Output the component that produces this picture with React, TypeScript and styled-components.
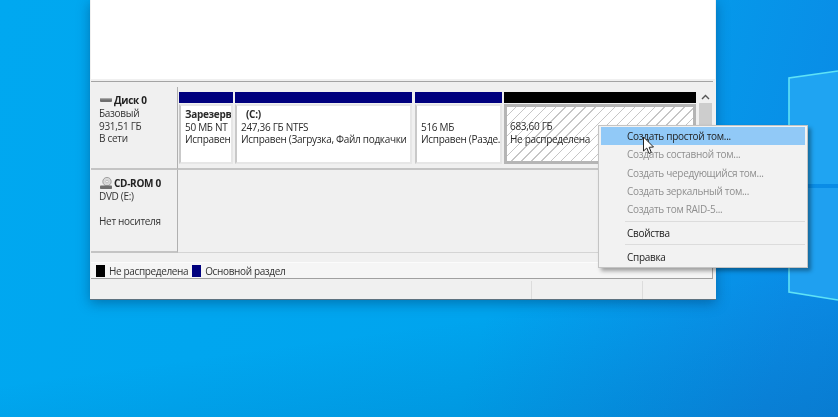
import React from "react";
import styled, { createGlobalStyle } from "styled-components";

const Global = createGlobalStyle`
  html, body { margin: 0; padding: 0; height: 100%; overflow: hidden; }
  #root { height: 100%; }
`;

const Desktop = styled.div`
  position: relative;
  width: 838px;
  height: 417px;
  overflow: hidden;
  padding: 0 0 0 90px;
  box-sizing: border-box;
  background:
    linear-gradient(172deg, rgba(0, 60, 130, 0) 72%, rgba(0, 50, 110, 0.16) 100%),
    linear-gradient(105deg, #00a8f0 0%, #00a4ee 60%, #0a8ce6 92%, #0a8ae4 100%);
  font-family: "Open Sans", "Noto Sans", sans-serif;
  font-size: 10px;
  letter-spacing: -0.3px;
  color: #222;
`;

const Wallpaper = styled.svg`
  position: absolute;
  left: 0;
  top: 0;
`;

const Window = styled.div`
  position: relative;
  width: 626px;
  height: 300px;
  box-sizing: border-box;
  padding: 0 1px 0 1px;
  background: #f0f0f0;
  display: flex;
  flex-direction: column;
  box-shadow: 0 3px 12px rgba(0, 40, 80, 0.4);
  border-bottom: 1px solid #5d7280;
  filter: blur(0.3px);
`;

const ListArea = styled.div`
  height: 79px;
  flex: none;
  background: #fff;
`;

const Splitter = styled.div`
  height: 2px;
  flex: none;
  margin: 0 2px 1px 0;
  background: #f0f0f0;
  border-bottom: 1px solid #a4a4a4;
`;

const DiskPane = styled.div`
  flex: none;
  height: 170px;
  margin-right: 3px;
  padding-top: 4px;
  background: #f0f0f0;
  display: flex;
  flex-direction: column;
  border-bottom: 1px solid #d4d4d4;
  box-sizing: border-box;
  position: relative;
`;

const DiskRow = styled.div<{ $h: number }>`
  display: flex;
  height: ${(p) => p.$h}px;
  flex: none;
`;

const DiskLabel = styled.div`
  width: 87px;
  flex: none;
  box-sizing: border-box;
  border-right: 1px solid #b0b0b0;
  border-bottom: 2px solid #c4c4c4;
  padding: 7px 0 0 8px;
  line-height: 12.6px;
  color: #333;
`;

const DiskTitle = styled.div`
  display: flex;
  align-items: center;
  gap: 1px;
  font-weight: 700;
  color: #222;
  height: 13px;
`;

const DiskLine = styled.div<{ $gapBefore?: boolean }>`
  margin-top: ${(p) => (p.$gapBefore ? "12px" : "0")};
  white-space: nowrap;
`;

const Partitions = styled.div`
  flex: 1;
  min-width: 0;
  display: flex;
  align-items: flex-start;
  padding: 5px 0 0 1px;
  border-bottom: 2px solid #c4c4c4;
  box-sizing: border-box;
  height: 83px;
`;

const Partition = styled.div<{ $w: number; $gap: number }>`
  width: ${(p) => p.$w}px;
  margin-right: ${(p) => p.$gap}px;
  flex: none;
  display: flex;
  flex-direction: column;
`;

const PartBar = styled.div<{ $black?: boolean }>`
  height: 11px;
  background: ${(p) => (p.$black ? "#000" : "#00007e")};
`;

const PartBody = styled.div<{ $hatched?: boolean }>`
  height: 60px;
  margin-top: 1px;
  box-sizing: border-box;
  border: ${(p) => (p.$hatched ? "3px solid #b5b5b5" : "2px solid #e6e6e6")};
  border-left-color: ${(p) => (p.$hatched ? "#b5b5b5" : "#c9c9c9")};
  padding: ${(p) => (p.$hatched ? "13px 0 0 3px" : "2px 0 0 4px")};
  line-height: 12.6px;
  overflow: hidden;
  white-space: nowrap;
  color: #2a2a2a;
  background: ${(p) =>
    p.$hatched
      ? "repeating-linear-gradient(135deg, #fff 0 6px, #c6c6c6 6px 7px)"
      : "#fff"};
`;

const PartTitle = styled.div`
  font-weight: 700;
  height: 12.6px;
`;

const Spacer = styled.div`
  height: 12.6px;
`;

const DriveName = styled.div`
  padding-left: 5px;
  font-weight: 700;
  height: 12.6px;
`;

const Scroll = styled.div`
  width: 13px;
  flex: none;
  margin-left: 3px;
  display: flex;
  flex-direction: column;
  align-items: center;
`;

const ScrollArrow = styled.svg`
  margin-top: 2px;
  margin-bottom: 3px;
`;

const ScrollThumb = styled.div`
  width: 100%;
  height: 120px;
  background: #cdcdcd;
`;

const Empty = styled.div`
  flex: 1;
`;

const Legend = styled.div`
  height: 15px;
  flex: none;
  margin: 9px 2px 0 0;
  padding-left: 5px;
  display: flex;
  align-items: center;
  color: #333;
  background: #f5f5f5;
  border-top: 1px solid #fbfbfb;
  border-right: 1px solid #a8a8a8;
  border-bottom: 1px solid #a0a0a0;
`;

const Swatch = styled.span<{ $c: string }>`
  width: 9px;
  height: 12px;
  background: ${(p) => p.$c};
  margin-right: 4px;
`;

const LegendText = styled.span`
  margin-right: 4px;
  letter-spacing: -0.36px;
`;

const Status = styled.div`
  flex: 1;
  display: flex;
  justify-content: flex-end;
  padding-top: 2px;
`;

const StatusCell = styled.div<{ $w: number }>`
  width: ${(p) => p.$w}px;
  border-left: 1px solid #dcdcdc;
`;

const Menu = styled.div`
  position: absolute;
  left: 598px;
  top: 125px;
  width: 210px;
  height: 143px;
  box-sizing: border-box;
  padding: 1px 2px;
  background: #f2f2f2;
  border: 1px solid #c4c4c4;
  box-shadow: 3px 3px 4px rgba(0, 0, 0, 0.35);
  filter: blur(0.3px);
`;

const MenuItem = styled.div<{ $active?: boolean; $off?: boolean }>`
  height: 18.3px;
  line-height: 18.3px;
  padding-left: 26px;
  white-space: nowrap;
  color: ${(p) => (p.$off ? "#8f8f8f" : "#222")};
  background: ${(p) => (p.$active ? "#91c9f7" : "transparent")};
`;

const MenuSep = styled.div`
  height: 1px;
  margin: 2.2px 0 2.2px 24px;
  background: #dcdcdc;
`;

const Cursor = styled.svg`
  position: absolute;
  left: 642px;
  top: 136px;
`;

const DiskIcon = () => (
  <svg width="14" height="12" viewBox="0 0 14 12">
    <rect x="1" y="3" width="12" height="4" rx="1" fill="#6f6f6f" />
    <rect x="1" y="3" width="12" height="1.3" fill="#a9a9a9" />
  </svg>
);

const CdIcon = () => (
  <svg width="14" height="14" viewBox="0 0 14 14">
    <circle cx="8" cy="4.6" r="4.2" fill="#d8d8d8" stroke="#8f8f8f" strokeWidth="0.8" />
    <circle cx="8" cy="4.6" r="1.2" fill="#fff" stroke="#9a9a9a" strokeWidth="0.5" />
    <rect x="1" y="8.4" width="12" height="3.6" rx="0.8" fill="#6f6f6f" />
  </svg>
);

export default function App() {
  const off = ["Создать составной том...", "Создать чередующийся том...", "Создать зеркальный том...", "Создать том RAID-5..."];
  return (
    <Desktop>
      <Global />
      <Wallpaper width="838" height="417" viewBox="0 0 838 417">
        <polygon points="789,78 838,71 838,184 789,184" fill="#1fa4f2" />
        <polygon points="789,188 838,188 838,300 789,292" fill="#1fa0f0" />
        <path d="M838,71 L789,78 L789,184 M789,188 L789,292 L838,300" fill="none" stroke="#5fe2f6" strokeWidth="1.6" />
      </Wallpaper>
      <Window>
        <ListArea />
        <Splitter />
        <DiskPane>
          <DiskRow $h={83}>
            <DiskLabel>
              <DiskTitle><DiskIcon />Диск 0</DiskTitle>
              <DiskLine>Базовый</DiskLine>
              <DiskLine>931,51 ГБ</DiskLine>
              <DiskLine>В сети</DiskLine>
            </DiskLabel>
            <Partitions>
              <Partition $w={54} $gap={2}>
                <PartBar />
                <PartBody>
                  <PartTitle>Зарезерв</PartTitle>
                  <div>50 МБ NT</div>
                  <div>Исправен</div>
                </PartBody>
              </Partition>
              <Partition $w={177} $gap={3}>
                <PartBar />
                <PartBody>
                  <DriveName>(C:)</DriveName>
                  <div>247,36 ГБ NTFS</div>
                  <div>Исправен (Загрузка, Файл подкачки</div>
                </PartBody>
              </Partition>
              <Partition $w={87} $gap={2}>
                <PartBar />
                <PartBody>
                  <Spacer />
                  <div>516 МБ</div>
                  <div>Исправен (Разде.</div>
                </PartBody>
              </Partition>
              <Partition $w={192} $gap={0}>
                <PartBar $black />
                <PartBody $hatched>
                  <div>683,60 ГБ</div>
                  <div>Не распределена</div>
                </PartBody>
              </Partition>
              <Scroll>
                <ScrollArrow width="9" height="6" viewBox="0 0 9 6">
                  <path d="M1 5 L4.5 1.5 L8 5" fill="none" stroke="#555" strokeWidth="1.4" />
                </ScrollArrow>
                <ScrollThumb />
              </Scroll>
              <Empty />
            </Partitions>
          </DiskRow>
          <DiskRow $h={83}>
            <DiskLabel>
              <DiskTitle><CdIcon />CD-ROM 0</DiskTitle>
              <DiskLine>DVD (E:)</DiskLine>
              <DiskLine $gapBefore>Нет носителя</DiskLine>
            </DiskLabel>
            <Empty />
          </DiskRow>
        </DiskPane>
        <Legend>
          <Swatch $c="#000" />
          <LegendText>Не распределена</LegendText>
          <Swatch $c="#00007e" />
          <LegendText>Основной раздел</LegendText>
        </Legend>
        <Status>
          <StatusCell $w={110} />
          <StatusCell $w={72} />
        </Status>
      </Window>
      <Menu>
        <MenuItem $active>Создать простой том...</MenuItem>
        {off.map((t) => (
          <MenuItem $off key={t}>{t}</MenuItem>
        ))}
        <MenuSep />
        <MenuItem>Свойства</MenuItem>
        <MenuSep />
        <MenuItem>Справка</MenuItem>
      </Menu>
      <Cursor width="13" height="19" viewBox="0 0 13 19">
        <path d="M1.5 1 L1.5 15 L4.8 12 L7 17.5 L9.3 16.5 L7.2 11.3 L11.5 11 Z" fill="#fff" stroke="#222" strokeWidth="1" />
      </Cursor>
    </Desktop>
  );
}
